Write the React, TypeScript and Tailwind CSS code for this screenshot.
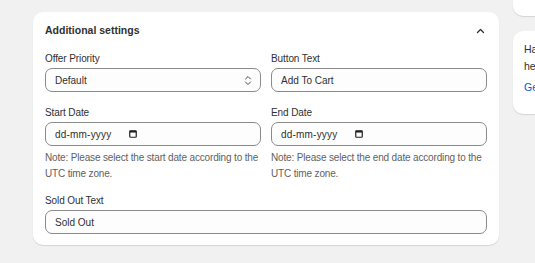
import React from 'react';

const font = { fontFamily: '"Liberation Sans", Arial, sans-serif' };

// 小图标
const ChevronUp = () => (
  <svg width="9" height="6" viewBox="0 0 9 6" fill="none">
    <path d="M1.5 4.5 L4.5 1.5 L7.5 4.5" stroke="#303030" strokeWidth="1.3" strokeLinecap="round" strokeLinejoin="round" />
  </svg>
);

const SelectIcon = () => (
  <svg width="8" height="11" viewBox="0 0 8 11" fill="none">
    <path d="M1.5 4 L4 1.5 L6.5 4" stroke="#4a4a4a" strokeWidth="1" strokeLinecap="round" strokeLinejoin="round" />
    <path d="M1.5 7 L4 9.5 L6.5 7" stroke="#4a4a4a" strokeWidth="1" strokeLinecap="round" strokeLinejoin="round" />
  </svg>
);

const CalendarIcon = () => (
  <svg width="8" height="8" viewBox="0 0 8 8" fill="none">
    <rect x="0.75" y="0.75" width="6.5" height="6.5" rx="0.8" stroke="#202020" strokeWidth="1.2" />
    <rect x="0.75" y="0.75" width="6.5" height="1.8" fill="#202020" />
  </svg>
);

const inputBox = 'h-6 w-full rounded-[7px] border border-[#8a8a8a] bg-[#fdfdfd] pl-[9px] pr-[10px] flex items-center text-[10px] text-[#303030]';

function Field({ label, children, note }: { label: string; children: React.ReactNode; note?: string }) {
  return (
    <div className="flex flex-col min-w-0">
      <div className="text-[10px] leading-[18px] tracking-[-0.1px] text-[#303030]">{label}</div>
      {children}
      {note && <p className="mt-[4px] text-[10px] leading-[16px] tracking-[-0.16px] text-[#616161]">{note}</p>}
    </div>
  );
}

function DateInput() {
  return (
    <div className={inputBox}>
      <span className="tracking-[0.2px]">dd-mm-yyyy</span>
      <span className="ml-[18px] flex items-center"><CalendarIcon /></span>
    </div>
  );
}

const cardShadow = 'shadow-[0_1px_0_0_rgba(26,26,26,0.07),0_1px_2px_rgba(0,0,0,0.06)]';

export default function App() {
  return (
    <div className="w-[535px] h-[263px] overflow-hidden bg-[#f1f1f1] flex gap-[14px] pl-[33px]" style={font}>
      {/* 左侧设置卡片 */}
      <div className="w-[466px] shrink-0 pt-3">
        <div className={'bg-white rounded-[10px] px-3 pt-[11px] pb-[11px] ' + cardShadow}>
          <div className="flex items-center justify-between h-4">
            <h2 className="text-[10.5px] font-bold text-[#303030]">Additional settings</h2>
            <span className="mr-[2px] flex items-center"><ChevronUp /></span>
          </div>

          <div className="mt-[11px] grid grid-cols-2 gap-x-[10px] gap-y-3">
            <Field label="Offer Priority">
              <div className={inputBox + ' justify-between'}>
                <span>Default</span>
                <span className="mr-[-2px] flex items-center"><SelectIcon /></span>
              </div>
            </Field>
            <Field label="Button Text">
              <div className={inputBox}>Add To Cart</div>
            </Field>
            <Field label="Start Date" note="Note: Please select the start date according to the UTC time zone.">
              <DateInput />
            </Field>
            <Field label="End Date" note="Note: Please select the end date according to the UTC time zone.">
              <DateInput />
            </Field>
            <div className="col-span-2 -mt-[2px]">
              <Field label="Sold Out Text">
                <div className={inputBox}>Sold Out</div>
              </Field>
            </div>
          </div>
        </div>
      </div>

      {/* 右侧栏 */}
      <div className="w-[200px] shrink-0 flex flex-col gap-[15px] -mt-[30px]">
        <div className={'h-[46px] bg-white rounded-[10px] ' + cardShadow} />
        <div className={'bg-white rounded-[10px] px-[11px] pt-[10px] pb-[18px] text-[10.5px] text-[#303030] ' + cardShadow}>
          <p className="leading-[17px]">Have questions about offers? We're<br />here to help you.</p>
          <p className="mt-[4px] leading-[17px] text-[#005bd3]">Get support</p>
        </div>
      </div>
    </div>
  );
}
